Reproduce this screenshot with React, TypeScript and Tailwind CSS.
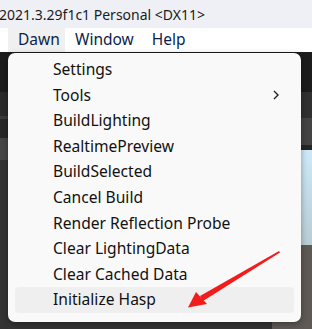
import React from "react";

const items = [
  "Settings",
  "Tools",
  "BuildLighting",
  "RealtimePreview",
  "BuildSelected",
  "Cancel Build",
  "Render Reflection Probe",
  "Clear LightingData",
  "Clear Cached Data",
  "Initialize Hasp",
];

export default function App() {
  const font = { fontFamily: '"Noto Sans", "Open Sans", sans-serif' };
  return (
    <div
      className="relative w-[312px] h-[329px] overflow-hidden bg-[#2e2e2e] text-[#1a1a1a]"
      style={font}
    >
      {/* title bar */}
      <div className="h-[28px] bg-[#eff0f6] flex items-center text-[14px] leading-none text-[#1b1b1b]">
        <span className="ml-[-1px] pt-[2px]">2021.3.29f1c1 Personal &lt;DX11&gt;</span>
      </div>
      {/* menu bar */}
      <div className="h-[24px] bg-white flex items-stretch text-[15.5px]">
        <div className="ml-[8px] w-[57px] bg-[#f0f0f0] flex items-center pl-[10px] text-[#0b1f4a]">
          Dawn
        </div>
        <div className="ml-[10px] flex items-center text-[#0b1f4a]">Window</div>
        <div className="ml-[18px] flex items-center text-[#0b1f4a]">Help</div>
      </div>
      {/* editor background */}
      <div className="h-[40px] bg-[#1c1c1c]" />
      <div className="flex h-[237px]">
        <div className="flex-1 flex flex-col">
          <div className="h-[24px] bg-[#2a2a2a]" />
          <div className="h-[3px] bg-[#3a3a3a]" />
          <div className="h-[19px] bg-[#282828]" />
          <div className="h-[22px] bg-[#464646]" />
          <div className="flex-1 bg-[#333333]" />
        </div>
        <div className="w-[40px] flex flex-col">
          <div className="h-[26px] bg-[#303030]" />
          <div className="h-[27px] bg-[#444444] flex items-center justify-center">
            <svg width="10" height="6" viewBox="0 0 10 6" className="ml-[8px]">
              <path d="M0 0 L10 0 L5 6 Z" fill="#8a8a8a" />
            </svg>
          </div>
          <div className="h-[5px] bg-[#262626]" />
          <div className="h-[95px] bg-gradient-to-b from-[#cde9f8] to-[#b8ccd4]" />
          <div className="flex-1 bg-[#5e5954]" />
        </div>
      </div>
      <div className="flex h-[8px]">
        <div className="w-[77px] bg-[#2e2e2e]" />
        <div className="w-[53px] bg-[#3c3c3c] border-x-2 border-[#1a1a1a]" />
        <div className="flex-1 bg-[#5c5752]" />
      </div>

      {/* dropdown menu */}
      <div className="absolute left-[8px] top-[53px] w-[293px] h-[269px] rounded-[7px] bg-[#f9f9f9] shadow-[0_2px_6px_rgba(0,0,0,0.35)] pt-[4px] px-[7px]">
        {items.map((t, i) => (
          <div
            key={t}
            className={
              "h-[25.6px] flex items-center pl-[38px] pr-[14px] text-[15.6px] rounded-[4px] " +
              (i === items.length - 1 ? "bg-[#efefef]" : "")
            }
          >
            <span className="flex-1 text-[#111]">{t}</span>
            {t === "Tools" && (
              <svg width="8" height="12" viewBox="0 0 8 12">
                <path d="M2 2 L6 6 L2 10" stroke="#222" strokeWidth="1.4" fill="none" />
              </svg>
            )}
          </div>
        ))}
      </div>

      {/* red arrow annotation */}
      <svg className="absolute left-0 top-0" width="312" height="329" viewBox="0 0 312 329">
        <path d="M279 251 L280 252.5 L203 301 L200 296 Z" fill="#f21c1c" />
        <path d="M188 307.5 L196 292 L207 304 Z" fill="#f21c1c" />
      </svg>
    </div>
  );
}
